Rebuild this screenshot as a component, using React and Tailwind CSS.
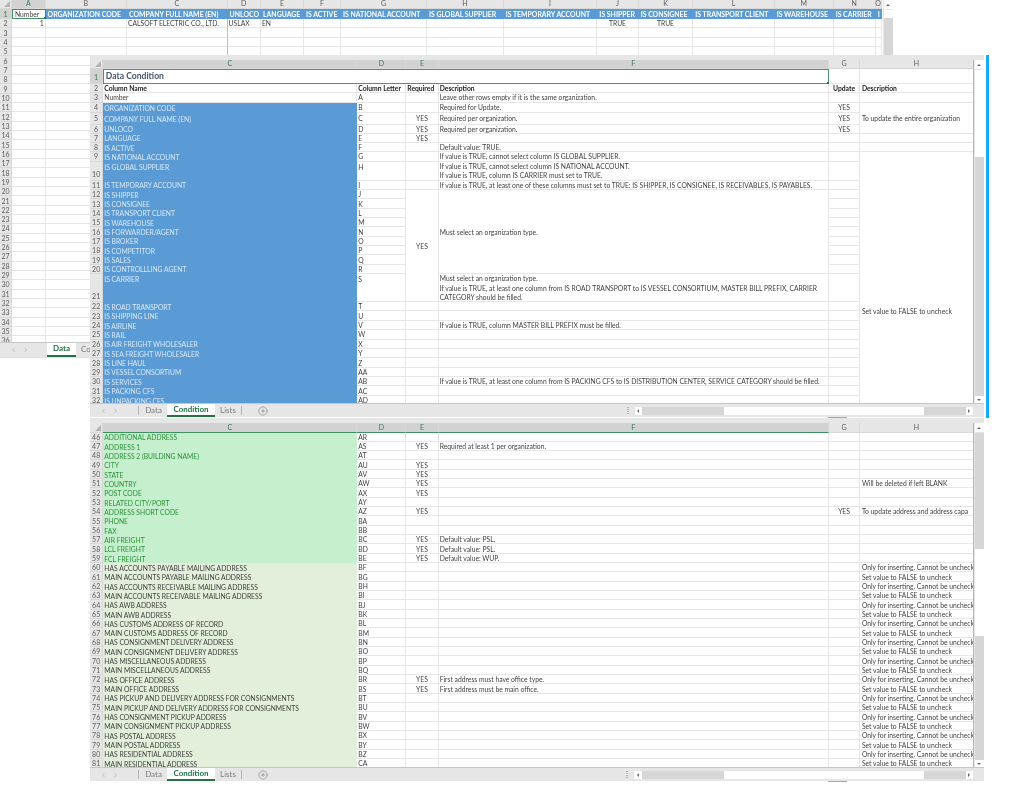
import { CirclePlus } from "lucide-react";

const bodyText = "text-[#3f3f3f]";

const dataCols = ["A", "B", "C", "D", "E", "F", "G", "H", "I", "J", "K", "L", "M", "N", "O"];
const dataHeads = [
  "Number",
  "ORGANIZATION CODE",
  "COMPANY FULL NAME (EN)",
  "UNLOCO",
  "LANGUAGE",
  "IS ACTIVE",
  "IS NATIONAL ACCOUNT",
  "IS GLOBAL SUPPLIER",
  "IS TEMPORARY ACCOUNT",
  "IS SHIPPER",
  "IS CONSIGNEE",
  "IS TRANSPORT CLIENT",
  "IS WAREHOUSE",
  "IS CARRIER",
  "I",
];
const dataRow2 = {
  0: { t: "1", cls: "items-end" },
  2: { t: "CALSOFT ELECTRIC CO., LTD." },
  3: { t: "USLAX" },
  4: { t: "EN" },
  9: { t: "TRUE", cls: "items-center" },
  10: { t: "TRUE", cls: "items-center" },
};

const upperRows = [
  [3, "Number", "A", "", "Leave other rows empty if it is the same organization.", "", ""],
  [4, "ORGANIZATION CODE", "B", "", "Required for Update.", "YES", { t: "To update the entire organization", cls: "row-span-3" }],
  [5, "COMPANY FULL NAME (EN)", "C", "YES", "Required per organization.", "YES", null],
  [6, "UNLOCO", "D", "YES", "Required per organization.", "YES", null],
  [7, "LANGUAGE", "E", "YES", "", "", ""],
  [8, "IS ACTIVE", "F", "", "Default value: TRUE.", "", ""],
  [9, "IS NATIONAL ACCOUNT", "G", "", "If value is TRUE, cannot select column IS GLOBAL SUPPLIER.", "", { t: "Set value to FALSE to uncheck", cls: "row-span-24 justify-start !pt-[155px]" }],
  [10, "IS GLOBAL SUPPLIER", "H", "", ["If value is TRUE, cannot select column IS NATIONAL ACCOUNT.", "If value is TRUE, column IS CARRIER must set to TRUE."], "", null],
  [11, "IS TEMPORARY ACCOUNT", "I", "", "If value is TRUE, at least one of these columns must set to TRUE: IS SHIPPER, IS CONSIGNEE, IS RECEIVABLES, IS PAYABLES.", "", null],
  [12, "IS SHIPPER", "J", { t: "YES", cls: "row-span-10" }, { t: "Must select an organization type.", cls: "row-span-9" }, "", null],
  [13, "IS CONSIGNEE", "K", null, null, "", null],
  [14, "IS TRANSPORT CLIENT", "L", null, null, "", null],
  [15, "IS WAREHOUSE", "M", null, null, "", null],
  [16, "IS FORWARDER/AGENT", "N", null, null, "", null],
  [17, "IS BROKER", "O", null, null, "", null],
  [18, "IS COMPETITOR", "P", null, null, "", null],
  [19, "IS SALES", "Q", null, null, "", null],
  [20, "IS CONTROLLLING AGENT", "R", null, null, "", null],
  [21, "IS CARRIER", "S", null, ["Must select an organization type.", "If value is TRUE, at least one column from IS ROAD TRANSPORT to IS VESSEL CONSORTIUM, MASTER BILL PREFIX, CARRIER", "CATEGORY should be filled."], "", null],
  [22, "IS ROAD TRANSPORT", "T", "", "", "", null],
  [23, "IS SHIPPING LINE", "U", "", "", "", null],
  [24, "IS AIRLINE", "V", "", "If value is TRUE, column MASTER BILL PREFIX must be filled.", "", null],
  [25, "IS RAIL", "W", "", "", "", null],
  [26, "IS AIR FREIGHT WHOLESALER", "X", "", "", "", null],
  [27, "IS SEA FREIGHT WHOLESALER", "Y", "", "", "", null],
  [28, "IS LINE HAUL", "Z", "", "", "", null],
  [29, "IS VESSEL CONSORTIUM", "AA", "", "", "", null],
  [30, "IS SERVICES", "AB", "", "If value is TRUE, at least one column from IS PACKING CFS to IS DISTRIBUTION CENTER, SERVICE CATEGORY should be filled.", "", null],
  [31, "IS PACKING CFS", "AC", "", "", "", null],
  [32, "IS UNPACKING CFS", "AD", "", "", "", null],
];

const lowerRows = [
  [46, "ADDITIONAL ADDRESS", "AR", "", "", "", ""],
  [47, "ADDRESS 1", "AS", "YES", "Required at least 1 per organization.", "", ""],
  [48, "ADDRESS 2 (BUILDING NAME)", "AT", "", "", "", ""],
  [49, "CITY", "AU", "YES", "", "", ""],
  [50, "STATE", "AV", "YES", "", "", ""],
  [51, "COUNTRY", "AW", "YES", "", "", "Will be deleted if left BLANK"],
  [52, "POST CODE", "AX", "YES", "", "", ""],
  [53, "RELATED CITY/PORT", "AY", "", "", "", ""],
  [54, "ADDRESS SHORT CODE", "AZ", "YES", "", "YES", "To update address and address capa"],
  [55, "PHONE", "BA", "", "", "", ""],
  [56, "FAX", "BB", "", "", "", ""],
  [57, "AIR FREIGHT", "BC", "YES", "Default value: PSL.", "", ""],
  [58, "LCL FREIGHT", "BD", "YES", "Default value: PSL.", "", ""],
  [59, "FCL FREIGHT", "BE", "YES", "Default value: WUP.", "", ""],
  [60, "HAS ACCOUNTS PAYABLE MAILING ADDRESS", "BF"],
  [61, "MAIN ACCOUNTS PAYABLE MAILING ADDRESS", "BG"],
  [62, "HAS ACCOUNTS RECEIVABLE MAILING ADDRESS", "BH"],
  [63, "MAIN ACCOUNTS RECEIVABLE MAILING ADDRESS", "BI"],
  [64, "HAS AWB ADDRESS", "BJ"],
  [65, "MAIN AWB ADDRESS", "BK"],
  [66, "HAS CUSTOMS ADDRESS OF RECORD", "BL"],
  [67, "MAIN CUSTOMS ADDRESS OF RECORD", "BM"],
  [68, "HAS CONSIGNMENT DELIVERY ADDRESS", "BN"],
  [69, "MAIN CONSIGNMENT DELIVERY ADDRESS", "BO"],
  [70, "HAS MISCELLANEOUS ADDRESS", "BP"],
  [71, "MAIN MISCELLANEOUS ADDRESS", "BQ"],
  [72, "HAS OFFICE ADDRESS", "BR", "YES", "First address must have office type."],
  [73, "MAIN OFFICE ADDRESS", "BS", "YES", "First address must be main office."],
  [74, "HAS PICKUP AND DELIVERY ADDRESS FOR CONSIGNMENTS", "BT"],
  [75, "MAIN PICKUP AND DELIVERY ADDRESS FOR CONSIGNMENTS", "BU"],
  [76, "HAS CONSIGNMENT PICKUP ADDRESS", "BV"],
  [77, "MAIN CONSIGNMENT PICKUP ADDRESS", "BW"],
  [78, "HAS POSTAL ADDRESS", "BX"],
  [79, "MAIN POSTAL ADDRESS", "BY"],
  [80, "HAS RESIDENTIAL ADDRESS", "BZ"],
  [81, "MAIN RESIDENTIAL ADDRESS", "CA"],
];

const range = (from, to) => Array.from({ length: to - from + 1 }, (_, i) => from + i);

const Cell = ({ value, className = "", filled }) => {
  if (value === null) return null;
  const item = value && value.t !== undefined ? value : { t: value };
  const lines = Array.isArray(item.t) ? item.t : [item.t];
  return (
    <div className={`flex min-w-0 flex-col justify-center overflow-hidden whitespace-nowrap px-[1px] pt-[1.5px] ${filled ? "" : "border-r border-b border-[#e6e6e6]"} ${className} ${item.cls || ""}`}>
      {lines.map((line, i) => (
        <span key={i}>{line}</span>
      ))}
    </div>
  );
};

const RowNum = ({ n, className = "", active }) => (
  <div className={`flex items-center justify-center border-r border-b border-[#d8d8d8] pt-[1.5px] text-[7px] ${active ? "bg-[#d2d2d2] text-[#2f7d55]" : "bg-[#e6e6e6] text-[#5c5c5c]"} ${className}`}>
    {n}
  </div>
);

const ColHead = ({ label, selected, underline }) => (
  <div className={`flex items-center justify-center border-r border-[#d8d8d8] text-[7px] ${selected ? "bg-[#d2d2d2] text-[#2f7d55]" : "bg-[#e6e6e6] text-[#5c5c5c]"} ${selected && underline ? "border-b border-b-[#3f8f65]" : "border-b border-b-[#d8d8d8]"}`}>
    {label}
  </div>
);

const Corner = () => (
  <div className="flex items-end justify-end border-r border-b border-[#d8d8d8] bg-[#e6e6e6] p-[1px]">
    <svg width="6" height="6" viewBox="0 0 6 6">
      <polygon points="6,0 6,6 0,6" fill="#b4b4b4" />
    </svg>
  </div>
);

const Arrow = ({ dir }) => {
  const points = {
    up: "1,4 3,2 5,4",
    down: "1,2 3,4 5,2",
    left: "4,1 2,3 4,5",
    right: "2,1 4,3 2,5",
  };
  return (
    <span className="flex flex-1 items-center justify-center bg-white">
      <svg width="6" height="6" viewBox="0 0 6 6">
        <polygon points={points[dir]} fill="#6a6a6a" />
      </svg>
    </span>
  );
};

const VScroll = ({ thumb, spaceBefore }) => (
  <div className="flex w-[10.3px] shrink-0 flex-col bg-[#e6e6e6] pl-[1px] pr-[0.3px]">
    <div className="flex h-[9px]">
      <Arrow dir="up" />
    </div>
    <div className="mt-[1px] flex min-h-0 flex-1 flex-col bg-[#d6d6d6]">
      <div className={`shrink-0 ${spaceBefore}`} />
      <div className={`shrink-0 bg-white ${thumb}`} />
    </div>
    <div className="flex h-[7px]">
      <Arrow dir="down" />
    </div>
  </div>
);

const NavArrows = () => (
  <div className="flex w-[47px] shrink-0 items-center gap-[7px] pl-[11px] text-[#c2c2c2]">
    <svg width="5" height="6" viewBox="0 0 5 6" fill="none" stroke="currentColor">
      <path d="M3.5 1L1.5 3l2 2" />
    </svg>
    <svg width="5" height="6" viewBox="0 0 5 6" fill="none" stroke="currentColor">
      <path d="M1.5 1l2 2-2 2" />
    </svg>
  </div>
);

const HScroll = () => (
  <div className="ml-auto flex items-center">
    <div className="mr-[6px] h-[7px] w-[2px] border-x border-dotted border-[#b5b5b5]" />
    <div className="flex h-[8px] w-[338.6px] items-stretch bg-[#d6d6d6]">
      <div className="flex w-[7.5px]">
        <Arrow dir="left" />
      </div>
      <div className="ml-[81.8px] w-[200px] bg-white" />
      <div className="ml-auto flex w-[7.5px]">
        <Arrow dir="right" />
      </div>
    </div>
    <div className="w-[11px]" />
  </div>
);

const ConditionTabs = () => (
  <div className="flex h-[14px] shrink-0 items-stretch border-t border-[#c6c6c6] bg-[#e6e6e6] text-[8px] text-[#7c7c7c]">
    <NavArrows />
    <div className="my-[2px] ml-[1px] flex w-[29px] items-center justify-center border-l border-[#b5b5b5] pl-[1px]">Data</div>
    <div className="flex w-[48px] items-center justify-center border-b-2 border-[#217346] bg-white font-bold text-[#217346]">Condition</div>
    <div className="my-[2px] flex w-[27px] items-center justify-center border-r border-[#b5b5b5]">Lists</div>
    <div className="ml-[16px] flex items-center text-[#777]">
      <CirclePlus size={10} strokeWidth={1.3} />
    </div>
    <HScroll />
  </div>
);

const SheetRows = ({ rows, lower }) =>
  rows.map(([n, c, d, e = "", f = "", g = "", h = ""]) => {
    let tone = "bg-[#5b9bd5] text-[#d9e8f6]";
    if (lower) tone = n < 60 ? "bg-[#c6efce] text-[#2a9238]" : "bg-[#e2efda] text-[#3f3f3f]";
    let hValue = h;
    if (lower && n >= 60) hValue = n % 2 === 0 ? "Only for inserting. Cannot be unchecked" : "Set value to FALSE to uncheck";
    const tall = !lower && (n === 10 || n === 21);
    return [
      <RowNum key={`${n}n`} n={n} className={tall ? "!items-end" : ""} />,
      n === 3 ? (
        <Cell key={`${n}c`} value={c} className={bodyText} />
      ) : (
        <Cell key={`${n}c`} value={c} filled className={`${tone} ${tall ? "!justify-start" : ""}`} />
      ),
      <Cell key={`${n}d`} value={d} className={`${bodyText} ${tall ? "!justify-start" : ""}`} />,
      <Cell key={`${n}e`} value={e} className={`${bodyText} items-center`} />,
      <Cell key={`${n}f`} value={f} className={bodyText} />,
      <Cell key={`${n}g`} value={g} className={`${bodyText} items-center`} />,
      <Cell key={`${n}h`} value={hValue} className={`${bodyText} pl-[1.5px]`} />,
    ];
  });

export default function App() {
  return (
    <div className="relative h-[810px] w-[1024px] overflow-hidden bg-white text-[6.75px] leading-[9.3px] text-[#3f3f3f] blur-[0.3px] [font-family:Lato,'Noto_Sans',sans-serif]">
      {/* Data sheet, behind the other two windows */}
      <section className="absolute top-0 left-0 flex h-[358px] w-[893px] flex-col border-b border-[#e0e0e0] bg-[#e6e6e6]">
        <div className="flex min-h-0 flex-1">
          <div className="min-h-0 flex-1 overflow-hidden bg-white">
            <div className="grid grid-cols-[12px_33.6px_81.4px_100.6px_33.4px_43px_37px_86px_76.7px_93.7px_41.3px_54.7px_81.3px_59px_42px_6px] grid-rows-[9px_10px_repeat(35,9.33px)]">
              <Corner />
              {dataCols.map((col, i) => (
                <ColHead key={col} label={col} selected={i === 0} />
              ))}
              <RowNum n={1} active />
              {dataHeads.map((head, i) =>
                i === 0 ? (
                  <div key={head} className="relative flex items-center border border-[#3f8f65] bg-white px-[2px] pt-[1px]">
                    {head}
                    <span className="absolute -right-[1px] -bottom-[1px] h-[2px] w-[2px] bg-[#217346]" />
                  </div>
                ) : (
                  <div key={head} className="flex items-center overflow-hidden whitespace-nowrap bg-[#5b9bd5] px-[2px] pt-[1.5px] text-[6.9px] font-bold text-white">
                    {head}
                  </div>
                )
              )}
              {range(2, 36).map((row) => [
                <RowNum key={`r${row}`} n={row} />,
                ...dataCols.map((col, i) => (
                  <Cell
                    key={`${col}${row}`}
                    value={row === 2 && dataRow2[i] ? dataRow2[i] : ""}
                    className={`${bodyText} ${i === 2 ? "!border-r-[#bdbdbd]" : ""}`}
                  />
                )),
              ])}
            </div>
          </div>
          <VScroll thumb="h-[8px]" spaceBefore="h-0" />
        </div>
        <div className="flex h-[15px] shrink-0 items-stretch border-t border-[#c6c6c6] bg-[#e6e6e6] text-[8px] text-[#7c7c7c]">
          <NavArrows />
          <div className="flex w-[29px] items-center justify-center border-b-2 border-[#217346] bg-white font-bold text-[#217346]">Data</div>
          <div className="flex w-[14px] items-center overflow-hidden pl-[5px]">Co</div>
        </div>
      </section>

      {/* Condition sheet, upper window */}
      <section className="absolute top-[55px] left-[90px] flex h-[363px] w-[899px] gap-[1.3px] bg-white">
        <div className="flex h-[362px] min-w-0 flex-1 flex-col bg-[#e6e6e6] pt-[5px]">
          <div className="flex min-h-0 flex-1">
            <div className="min-h-0 flex-1 overflow-hidden border-r border-[#b5b5b5] bg-white">
              <div className="grid grid-cols-[13.3px_254px_49px_32.4px_390px_31.7px_113.3px] grid-rows-[9px_14.5px_9.5px_9.5px_10.5px_11.5px_9px_9.5px_9px_9.5px_19px_9.5px_repeat(9,9.33px)_28px_repeat(11,9.4px)]">
                <Corner />
                <ColHead label="C" selected />
                <ColHead label="D" selected />
                <ColHead label="E" selected />
                <ColHead label="F" selected />
                <ColHead label="G" />
                <ColHead label="H" />
                <RowNum n={1} active className="!items-end" />
                <div className="relative col-span-4 flex items-center border border-[#4d9470] px-[1.5px] text-[8.6px] font-bold text-[#44546a]">
                  Data Condition
                  <span className="absolute -right-[1px] -bottom-[1px] h-[2px] w-[2px] bg-[#217346]" />
                </div>
                <Cell value="" />
                <Cell value="" />
                <RowNum n={2} />
                <Cell value="Column Name" className="font-bold text-[#222]" />
                <Cell value="Column Letter" className="font-bold text-[#222]" />
                <Cell value="Required" className="font-bold text-[#222]" />
                <Cell value="Description" className="font-bold text-[#222]" />
                <Cell value="Update" className="items-center font-bold text-[#222]" />
                <Cell value="Description" className="pl-[1.5px] font-bold text-[#222]" />
                <SheetRows rows={upperRows} />
              </div>
            </div>
            <VScroll thumb="h-[87px]" spaceBefore="h-0" />
          </div>
          <ConditionTabs />
        </div>
        <div className="w-[3.5px] bg-[#12acf5]" />
        <span className="absolute bottom-0 left-[738px] h-[1px] w-[19px] bg-[#a8a8a8]" />
      </section>

      {/* Condition sheet, lower window */}
      <section className="absolute top-[418px] left-[90px] flex h-[363px] w-[894px] flex-col bg-[#e6e6e6] pt-[5px]">
        <div className="flex min-h-0 flex-1">
          <div className="min-h-0 flex-1 overflow-hidden border-r border-[#b5b5b5] bg-white">
            <div className="grid grid-cols-[13.3px_254px_49px_32.4px_390px_31.7px_113.3px] grid-rows-[9.5px_repeat(36,9.33px)]">
              <Corner />
              <ColHead label="C" selected underline />
              <ColHead label="D" selected underline />
              <ColHead label="E" selected underline />
              <ColHead label="F" selected underline />
              <ColHead label="G" />
              <ColHead label="H" />
              <SheetRows rows={lowerRows} lower />
            </div>
          </div>
          <VScroll thumb="h-[87px]" spaceBefore="h-[116px]" />
        </div>
        <ConditionTabs />
        <span className="absolute -bottom-[1px] left-[738px] h-[1px] w-[19px] bg-[#a8a8a8]" />
      </section>
    </div>
  );
}
